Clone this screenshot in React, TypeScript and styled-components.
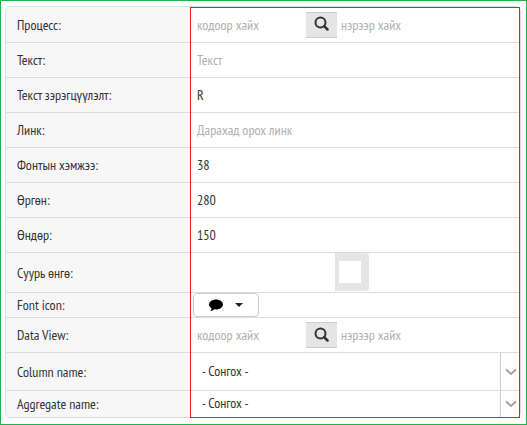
import React from "react";
import styled, { createGlobalStyle } from "styled-components";

const line = "#dddddd";

const GlobalStyle = createGlobalStyle`
  *, *::before, *::after { box-sizing: border-box; }
  body { margin: 0; background: #ffffff; }
  body, input, select, button {
    font-family: "PT Sans Narrow", "Liberation Sans Narrow", "Noto Sans", sans-serif;
    font-size: 14px;
    line-height: 18px;
    color: #333333;
  }
`;

const Page = styled.main`
  min-height: 100vh;
  padding: 5px 5px 6px 4px;
  border: 1px solid #22b14c;
`;

const Form = styled.form`
  position: relative;
  border: 1px solid ${line};
  border-radius: 5px;
  background: #ffffff;

  &::after {
    content: "";
    position: absolute;
    inset: 0 0 -1px 184px;
    border: 1px solid #ed1c24;
    pointer-events: none;
  }
`;

const Row = styled.div<{ $height: number }>`
  display: grid;
  grid-template-columns: 184px minmax(0, 1fr);
  height: ${(p) => p.$height}px;
  border-bottom: 1px solid ${line};

  &:last-child { border-bottom: 0; }
`;

const Label = styled.label`
  display: flex;
  align-items: center;
  padding: 0 11px;
  background: #f7f7f7;
  white-space: nowrap;

  ${Row}:first-child & { border-top-left-radius: 4px; }
  ${Row}:last-child & { border-bottom-left-radius: 4px; }
`;

const Cell = styled.div`
  display: flex;
  align-items: center;
  min-width: 0;
  padding-left: 1px;
`;

const TextInput = styled.input`
  flex: 1;
  min-width: 0;
  height: 100%;
  padding: 0 6px;
  border: 0;
  outline: 0;
  background: transparent;

  &::placeholder { color: #b0b0b0; opacity: 1; }
`;

const CodeInput = styled(TextInput)`
  flex: 0 0 115px;
`;

const NameInput = styled(TextInput)`
  padding-left: 4px;
`;

const SearchButton = styled.button`
  display: flex;
  align-items: center;
  justify-content: center;
  width: 31px;
  height: 26px;
  padding: 0 0 2px;
  border: solid #cccccc;
  border-width: 1px 0;
  background: #e5e5e5;
`;

const ColorCell = styled(Cell)`
  justify-content: center;
  align-items: flex-start;
  padding-right: 8px;
`;

const ColorInput = styled.input`
  appearance: none;
  width: 34px;
  height: 38px;
  padding: 8px 8px 8px 4px;
  border: 0;
  border-radius: 0 4px 4px 0;
  background: #e5e5e5;

  &::-webkit-color-swatch-wrapper { padding: 0; }
  &::-webkit-color-swatch { border: 0; border-radius: 0; }
`;

const IconButton = styled.button`
  display: flex;
  align-items: center;
  justify-content: center;
  gap: 12px;
  width: 66px;
  height: 24px;
  margin-left: 2px;
  padding: 0;
  border: 1px solid #cccccc;
  border-radius: 4px;
  background: #ffffff;
`;

const SelectBox = styled.div`
  flex: 1;
  display: grid;
  grid-template-columns: minmax(0, 1fr) 20px;
  height: 100%;
`;

const Select = styled.select`
  grid-area: 1 / 1 / 2 / 3;
  appearance: none;
  padding: 0 30px 2px 11px;
  border: 0;
  outline: 0;
  background: transparent;
`;

const Arrow = styled.span`
  grid-area: 1 / 2;
  display: flex;
  align-items: center;
  justify-content: center;
  border-left: 1px solid #cccccc;
  pointer-events: none;
`;

const SearchIcon = () => (
  <svg width="15" height="15" viewBox="0 0 15 15" fill="none" stroke="#333" aria-hidden="true">
    <circle cx="6.500" cy="6.500" r="5" strokeWidth="2" />
    <path d="M10.200 10.200 13.500 13.500" strokeWidth="2.500" strokeLinecap="round" />
  </svg>
);

const CommentIcon = () => (
  <svg width="14" height="14" viewBox="0 0 14 14" aria-hidden="true">
    <path d="M7 1.500c3.900 0 7 2.200 7 5s-3.100 5-7 5c-.6 0-1.200-.05-1.700-.15C4.200 12.300 2.800 12.900 1.200 13c.8-.8 1.300-1.600 1.400-2.700C1 9.400 0 8 0 6.500c0-2.800 3.100-5 7-5Z" fill="#000" />
  </svg>
);

const CaretIcon = () => (
  <svg width="8" height="4" viewBox="0 0 8 4" aria-hidden="true">
    <path d="M0 0h8L4 4Z" fill="#222" />
  </svg>
);

const ChevronIcon = () => (
  <svg width="12" height="8" viewBox="0 0 12 8" fill="none" aria-hidden="true">
    <path d="m1 1.500 5 4.500 5-4.500" stroke="#a3a3a3" strokeWidth="2" />
  </svg>
);

function TextRow(props: { id: string; label: string; height?: number; value?: string; placeholder?: string }) {
  return (
    <Row $height={props.height ?? 35}>
      <Label htmlFor={props.id}>{props.label}</Label>
      <Cell>
        <TextInput id={props.id} defaultValue={props.value} placeholder={props.placeholder} />
      </Cell>
    </Row>
  );
}

function LookupRow({ id, label, height }: { id: string; label: string; height: number }) {
  return (
    <Row $height={height}>
      <Label htmlFor={id}>{label}</Label>
      <Cell>
        <CodeInput id={id} placeholder="кодоор хайх" />
        <SearchButton type="button" aria-label="Хайх">
          <SearchIcon />
        </SearchButton>
        <NameInput placeholder="нэрээр хайх" aria-label={label} />
      </Cell>
    </Row>
  );
}

function SelectRow({ id, label, height }: { id: string; label: string; height: number }) {
  return (
    <Row $height={height}>
      <Label htmlFor={id}>{label}</Label>
      <Cell>
        <SelectBox>
          <Select id={id}>
            <option>- Сонгох -</option>
          </Select>
          <Arrow>
            <ChevronIcon />
          </Arrow>
        </SelectBox>
      </Cell>
    </Row>
  );
}

export default function App() {
  return (
    <>
      <GlobalStyle />
      <Page>
        <Form>
          <LookupRow id="process" label="Процесс:" height={36} />
          <TextRow id="text" label="Текст:" placeholder="Текст" />
          <TextRow id="align" label="Текст зэрэгцүүлэлт:" value="R" />
          <TextRow id="link" label="Линк:" placeholder="Дарахад орох линк" />
          <TextRow id="font-size" label="Фонтын хэмжээ:" value="38" />
          <TextRow id="width" label="Өргөн:" value="280" />
          <TextRow id="height" label="Өндөр:" value="150" />
          <Row $height={40}>
            <Label htmlFor="background">Суурь өнгө:</Label>
            <ColorCell>
              <ColorInput id="background" type="color" defaultValue="#ffffff" />
            </ColorCell>
          </Row>
          <Row $height={25}>
            <Label htmlFor="font-icon">Font icon:</Label>
            <Cell>
              <IconButton id="font-icon" type="button">
                <CommentIcon />
                <CaretIcon />
              </IconButton>
            </Cell>
          </Row>
          <LookupRow id="data-view" label="Data View:" height={35} />
          <SelectRow id="column" label="Column name:" height={38} />
          <SelectRow id="aggregate" label="Aggregate name:" height={26} />
        </Form>
      </Page>
    </>
  );
}
